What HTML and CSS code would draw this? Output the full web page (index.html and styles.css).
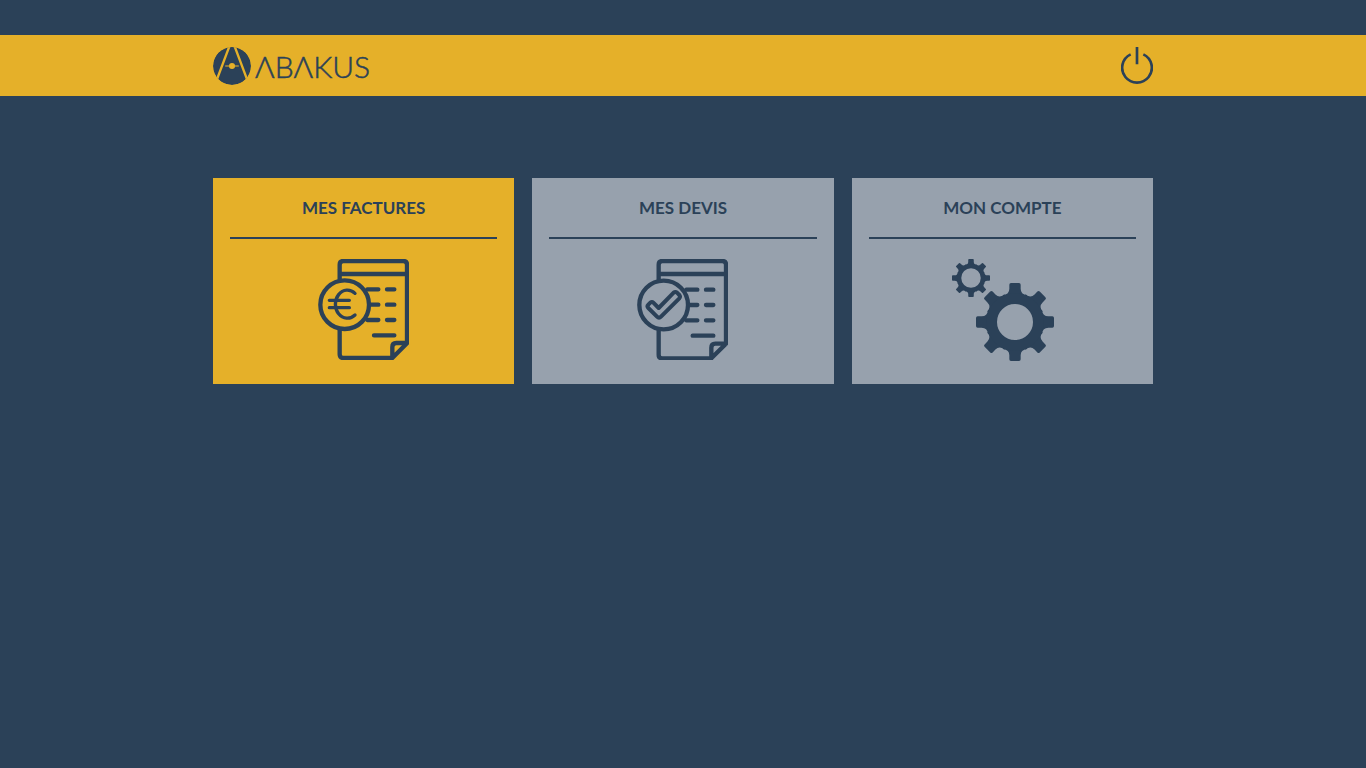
FILE: index.html
```html
<!DOCTYPE html>
<html lang="fr">
<head>
  <meta charset="utf-8">
  <meta name="viewport" content="width=device-width, initial-scale=1">
  <title>Abakus</title>
  <link rel="stylesheet" href="styles.css">
</head>
<body>
  <header class="topbar">
    <div class="container topbar-inner">
      <a class="brand" href="#" aria-label="Abakus">
        <svg class="brand-mark" viewBox="24 37 112 112" aria-hidden="true">
          <clipPath id="disc"><circle cx="80" cy="93" r="56"/></clipPath>
          <g clip-path="url(#disc)">
            <circle class="fill" cx="80" cy="93" r="56"/>
            <path class="mark-line" d="M73 33 34 137M87 33 126 137"/>
            <path class="mark-bar" d="M60 93H100"/>
            <circle class="mark-dot" cx="80" cy="93" r="9"/>
          </g>
        </svg>
        <span class="brand-name">ΛBΛKUS</span>
      </a>
      <button class="power" type="button" aria-label="Déconnexion">
        <svg viewBox="48 36 96 111" aria-hidden="true">
          <path class="power-line" d="M77 58A44.500 44.500 0 1 0 115 58M96 36V88"/>
        </svg>
      </button>
    </div>
  </header>

  <main class="container cards">
    <a class="card card-active" href="#">
      <h2 class="card-title">MES FACTURES</h2>
      <svg class="card-icon icon-doc" viewBox="24 27 273 303" aria-hidden="true">
        <path class="line" d="M89 88V44Q89 33 100 33H280Q291 33 291 44V280L247 324H100Q89 324 89 313V240M89 72H291M247 324V291Q247 279 259 279H291M172 118H205M231 118H253M180 164H205M231 164H253M172 210H205M231 210H253M192 256H253"/>
        <circle class="line" cx="104" cy="164" r="73"/>
        <path class="line line-thin" d="M135 130A36 42 0 1 0 135 195M58 151H118M58 173H118"/>
      </svg>
    </a>
    <a class="card" href="#">
      <h2 class="card-title">MES DEVIS</h2>
      <svg class="card-icon icon-doc" viewBox="21 27 273 303" aria-hidden="true">
        <path class="line" d="M86 88V44Q86 33 97 33H277Q288 33 288 44V281L244 325H97Q86 325 86 314V240M86 72H288M244 325V293Q244 281 256 281H288M169 119H202M228 119H250M177 165H202M228 165H250M169 211H202M228 211H250M188 257H250"/>
        <circle class="line" cx="101" cy="165" r="73"/>
        <path class="line line-check" d="M55 164 61 158Q66 154 70 158L86 174 131 128Q136 124 141 128L148 135Q152 140 148 145L93 200Q87 206 81 200L55 174Q50 169 55 164Z"/>
      </svg>
    </a>
    <a class="card" href="#">
      <h2 class="card-title">MON COMPTE</h2>
      <svg class="card-icon icon-gears" viewBox="15 27 312 306" aria-hidden="true">
        <defs>
          <path id="tooth" d="M-38-65-36-81Q-17-83-17-100V-112Q-17-117-12-117H12Q17-117 17-112V-100Q17-83 36-81L38-65Z"/>
          <g id="teeth">
            <use href="#tooth"/>
            <use href="#tooth" transform="rotate(45)"/>
            <use href="#tooth" transform="rotate(90)"/>
            <use href="#tooth" transform="rotate(135)"/>
            <use href="#tooth" transform="rotate(180)"/>
            <use href="#tooth" transform="rotate(225)"/>
            <use href="#tooth" transform="rotate(270)"/>
            <use href="#tooth" transform="rotate(315)"/>
          </g>
        </defs>
        <g class="fill" transform="translate(210 216)">
          <use href="#teeth"/>
          <circle class="ring" r="70" stroke-width="32"/>
        </g>
        <g class="fill" transform="translate(78 84) scale(0.487)">
          <use href="#teeth"/>
          <circle class="ring" r="73" stroke-width="26"/>
        </g>
      </svg>
    </a>
  </main>
</body>
</html>
```
FILE: styles.css
```css
:root {
  --navy: #2b4158;
  --gold: #e5b029;
  --grey: #97a1ad;
}

* {
  box-sizing: border-box;
}

body {
  margin: 0;
  padding-top: 35px;
  background: var(--navy);
  color: var(--navy);
  font-family: Lato, "Liberation Sans", sans-serif;
}

.container {
  width: 100%;
  max-width: 940px;
  margin: 0 auto;
}

.topbar {
  background: var(--gold);
}

.topbar-inner {
  display: flex;
  align-items: center;
  justify-content: space-between;
  padding: 12px 0 11px;
}

.brand {
  display: flex;
  align-items: center;
  gap: 4px;
  color: inherit;
  text-decoration: none;
}

.brand-mark {
  display: block;
  width: 38px;
  height: 38px;
}

.brand-name {
  font-size: 30px;
  font-weight: 300;
  line-height: 38px;
  -webkit-text-stroke: 0.5px var(--navy);
}

.fill {
  fill: var(--navy);
}

.mark-line,
.mark-bar {
  fill: none;
  stroke: var(--gold);
  stroke-width: 7;
}

.mark-bar {
  stroke-width: 4;
  opacity: 0.7;
}

.mark-dot {
  fill: var(--gold);
}

.power {
  align-self: flex-start;
  padding: 0;
  border: 0;
  background: none;
  cursor: pointer;
}

.power svg {
  display: block;
  width: 32px;
  height: 37px;
}

.power-line {
  fill: none;
  stroke: var(--navy);
  stroke-width: 8;
}

.cards {
  display: grid;
  grid-template-columns: repeat(3, 1fr);
  gap: 18px;
  margin-top: 82px;
}

.card {
  display: flex;
  flex-direction: column;
  align-items: center;
  gap: 20px;
  padding: 18px 17px 23px;
  background: var(--grey);
  color: inherit;
  text-decoration: none;
}

.card-active {
  background: var(--gold);
}

.card-title {
  width: 100%;
  margin: 0;
  padding-bottom: 17px;
  border-bottom: 2px solid var(--navy);
  font-size: 17px;
  font-weight: 700;
  line-height: 24px;
  text-align: center;
}

.card-icon {
  display: block;
}

.icon-doc {
  width: 91px;
  height: 101px;
}

.icon-gears {
  width: 104px;
  height: 102px;
}

.line {
  fill: none;
  stroke: var(--navy);
  stroke-width: 13;
  stroke-linecap: round;
  stroke-linejoin: round;
}

.line-thin {
  stroke-width: 10;
}

.line-check {
  stroke-width: 12;
}

.ring {
  fill: none;
  stroke: var(--navy);
}
```
